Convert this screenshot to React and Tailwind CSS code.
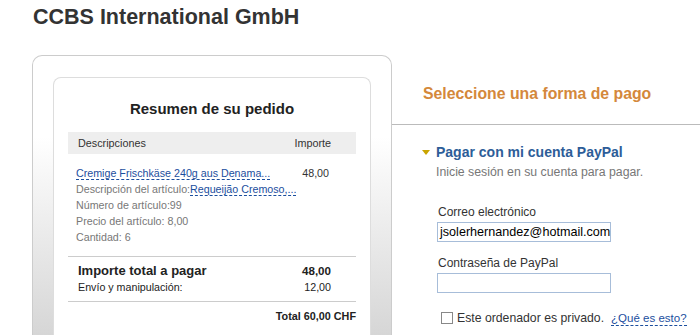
import React from 'react';

const linkCls = 'text-[#1b4e9e] border-b border-dashed border-[#1b4e9e]';

const OrderSummary = () => {
    return (
        <div className="ml-[32px] w-[360px] h-[290px] shrink-0 rounded-t-[10px] border border-b-0 border-[#cccccc] bg-linear-to-b from-white from-[28%] to-[#d4d4d4] px-[20px] pt-[21px]">
            <div className="h-full rounded-t-[8px] border border-b-0 border-[#dddddd] bg-white px-[14px] pt-[22px]">
                <h2 className="text-center text-[15px] leading-[18px] font-bold text-[#222]">Resumen de su pedido</h2>

                <div className="mt-[14px] flex h-[22px] items-center justify-between bg-[#eeeeee] pl-[10px] pr-[25px] text-[10.8px] text-[#333]">
                    <span>Descripciones</span>
                    <span>Importe</span>
                </div>

                <div className="mt-[11px] flex justify-between pl-[8px] pr-[27px] text-[10.7px] leading-[16px]">
                    <div className="flex flex-col whitespace-nowrap text-[#777]">
                        <span><span className={linkCls}>Cremige Frischkäse 240g aus Denama...</span></span>
                        <span>Descripción del artículo:<span className={linkCls}>Requeijão Cremoso,...</span></span>
                        <span>Número de artículo:99</span>
                        <span>Precio del artículo: 8,00</span>
                        <span>Cantidad: 6</span>
                    </div>
                    <span className="text-[#333]">48,00</span>
                </div>

                <div className="mt-[11px] border-t border-[#cccccc] pt-[6px] pb-[6px] pl-[10px] pr-[25px] leading-[16px] text-[#222]">
                    <div className="flex items-baseline justify-between font-bold">
                        <span className="text-[13px]">Importe total a pagar</span>
                        <span className="text-[11.6px]">48,00</span>
                    </div>
                    <div className="flex justify-between text-[10.7px]">
                        <span>Envío y manipulación:</span>
                        <span>12,00</span>
                    </div>
                </div>

                <div className="border-t border-[#cccccc] pt-[6px] text-right text-[10.8px] leading-[16px] font-bold text-[#222]">
                    Total 60,00 CHF
                </div>
            </div>
        </div>
    );
};

const PaymentPanel = () => {
    return (
        <div className="flex-1">
            <div className="border-b border-[#bbbbbb] pl-[31px] pt-[29px] pb-[20px]">
                <h2 className="text-[15.8px] leading-[20px] font-bold text-[#d4883b]">Seleccione una forma de pago</h2>
            </div>

            <div className="mt-[19px] flex items-center pl-[30px]">
                <svg width="8" height="5" viewBox="0 0 8 5" className="mr-[6px]">
                    <polygon points="0,0 8,0 4,5" fill="#c9a400" />
                </svg>
                <span className="text-[14px] leading-[17px] font-bold text-[#2d5d98]">Pagar con mi cuenta PayPal</span>
            </div>
            <p className="mt-[4px] pl-[44px] text-[12.3px] leading-[15px] text-[#777]">Inicie sesión en su cuenta para pagar.</p>

            <div className="mt-[25px] pl-[46px] text-[12px] leading-[15px] text-[#333]">Correo electrónico</div>
            <div className="mt-[2px] ml-[45px] flex h-[20px] w-[174px] items-center border border-[#a7bdd9] bg-white pl-[2px] text-[12.6px] text-black">
                jsolerhernandez@hotmail.com
            </div>

            <div className="mt-[14px] pl-[46px] text-[12px] leading-[15px] text-[#333]">Contraseña de PayPal</div>
            <div className="mt-[2px] ml-[45px] h-[20px] w-[174px] border border-[#a7bdd9] bg-white"></div>

            <div className="mt-[17px] flex items-center pl-[49px] leading-[16px]">
                <span className="h-[12px] w-[12px] border border-[#888] bg-white"></span>
                <span className="ml-[4px] text-[12.25px] text-[#333]">Este ordenador es privado.</span>
                <span className={`ml-[7px] text-[11.5px] leading-[14px] ${linkCls}`}>¿Qué es esto?</span>
            </div>
        </div>
    );
};

const App = () => {
    return (
        <div className="h-[335px] w-[700px] overflow-hidden bg-white font-['Liberation_Sans',Arial,sans-serif] text-[#333]">
            <h1 className="pl-[33px] pt-[5px] text-[21.5px] leading-[24px] font-bold text-[#333]">CCBS International GmbH</h1>
            <div className="mt-[26px] flex">
                <OrderSummary />
                <PaymentPanel />
            </div>
        </div>
    );
};

export default App;
